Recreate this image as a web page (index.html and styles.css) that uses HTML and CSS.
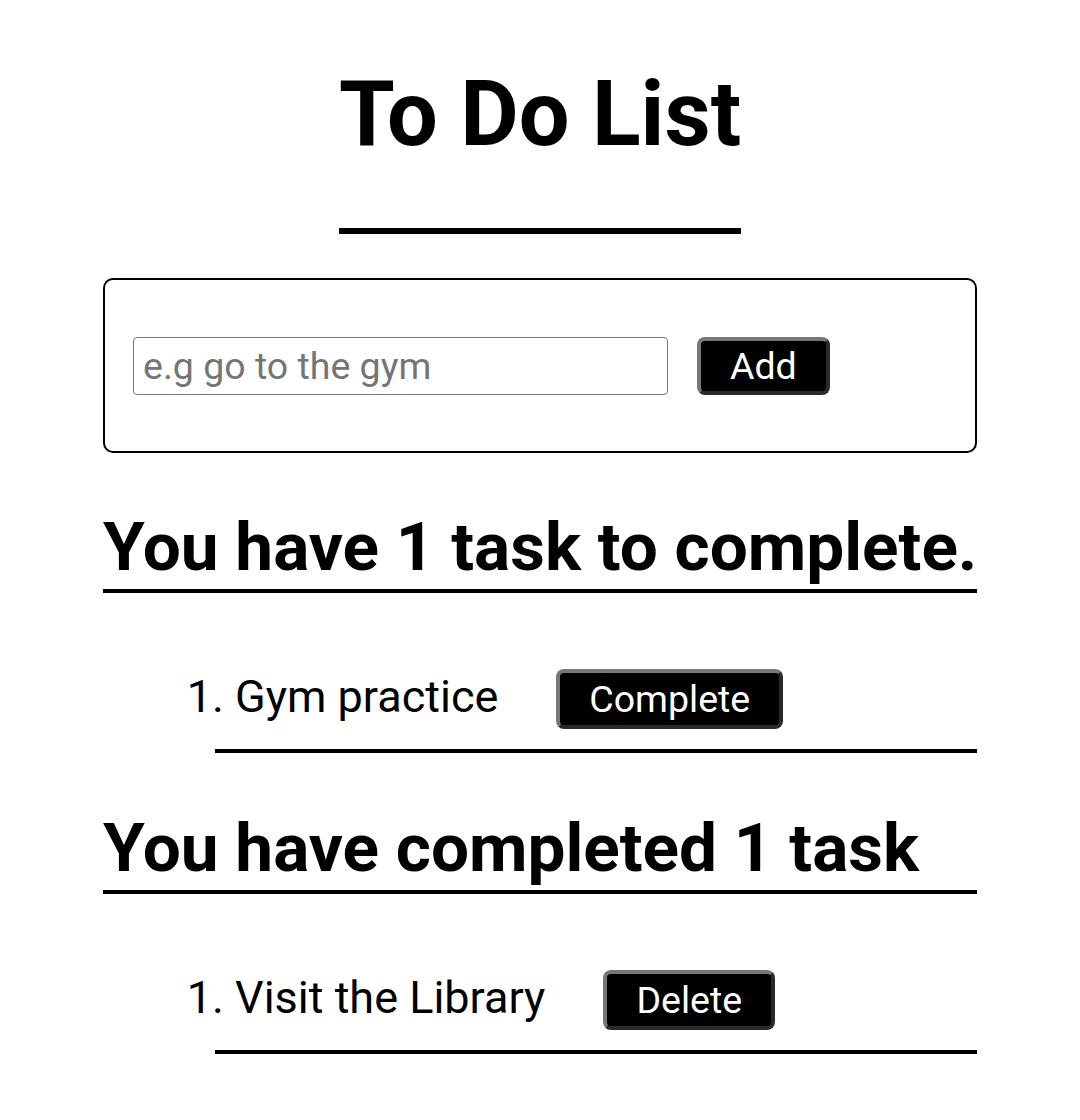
FILE: index.html
```html
<!DOCTYPE html>
<html>
<head>
<meta charset="utf-8">
<link rel="stylesheet" href="styles.css">
</head>
<body>
<header class="header">
  <h1 class="title">To Do List</h1>
</header>
<main class="main">
  <form class="add-form">
    <input class="task-input" type="text" placeholder="e.g go to the gym">
    <button class="btn" type="button">Add</button>
  </form>
  <h2 class="section-title">You have 1 task to complete.</h2>
  <ol class="task-list">
    <li class="task"><span class="task-text">Gym practice</span><button class="btn task-btn" type="button">Complete</button></li>
  </ol>
  <h2 class="section-title">You have completed 1 task</h2>
  <ol class="task-list">
    <li class="task"><span class="task-text">Visit the Library</span><button class="btn task-btn" type="button">Delete</button></li>
  </ol>
</main>
</body>
</html>
```

FILE: styles.css
```css
* { box-sizing: border-box; }
body {
  margin: 0;
  font-family: Roboto, "Liberation Sans", sans-serif;
  color: #000;
  background: #fff;
}
.header {
  display: flex;
  justify-content: center;
  padding-top: 61px;
}
.title {
  margin: 0;
  font-size: 90px;
  font-weight: 700;
  line-height: 108px;
  padding-bottom: 59px;
  border-bottom: 6px solid #000;
}
.main {
  width: 874px;
  margin: 44px auto 0;
}
.add-form {
  display: flex;
  align-items: center;
  gap: 29px;
  height: 175px;
  padding: 0 28px;
  border: 2px solid #000;
  border-radius: 10px;
}
.task-input {
  width: 535px;
  height: 58px;
  padding: 0 9px;
  font-family: inherit;
  font-size: 37.5px;
  border: 1px solid #767676;
  border-radius: 4px;
}
.task-input::placeholder { color: #757575; }
.btn {
  background: #000;
  color: #fff;
  font-family: inherit;
  font-size: 37.5px;
  border: 4px solid;
  border-color: #777 #2a2a2a #2a2a2a #777;
  border-radius: 8px;
  height: 58px;
  padding: 0 29px;
}
.section-title {
  margin: 53px 0 0;
  font-size: 67.5px;
  font-weight: 700;
  line-height: 81px;
  white-space: nowrap;
  padding-bottom: 2px;
  border-bottom: 4px solid #000;
}
.task-list {
  margin: 0;
  padding: 76px 0 0 112px;
  font-size: 45px;
}
.task-list + .section-title { margin-top: 54px; }
.task {
  display: flex;
  align-items: center;
  padding: 0 0 20px 20px;
  border-bottom: 4px solid #000;
}
.task-text {
  display: list-item;
  margin-bottom: 6px;
}
.task-btn {
  height: 60px;
  margin-left: 58px;
}
```
